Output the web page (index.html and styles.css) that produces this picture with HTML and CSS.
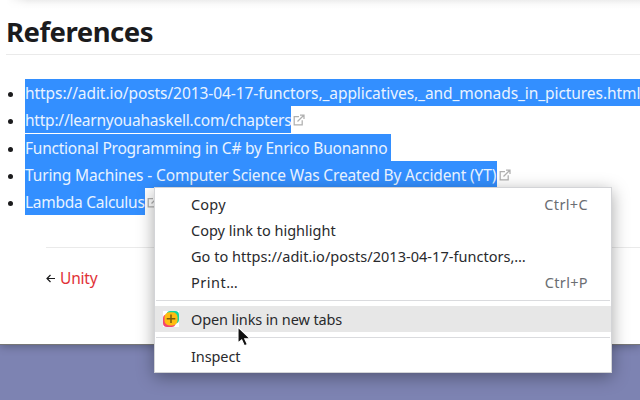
FILE: index.html
```html
<!DOCTYPE html>
<html lang="en">
<head>
<meta charset="utf-8">
<title>References</title>
<link rel="stylesheet" href="styles.css">
</head>
<body>
<svg class="defs" width="0" height="0"><defs>
<symbol id="external" viewBox="0 0 12 12"><path d="M6 2.6H1.2v8.2h8V6.2M4.5 7.5l5.8-5.8M7 1h4v4" fill="none" stroke="currentColor" stroke-width="1.25"/></symbol>
</defs></svg>
<main class="page">
  <div class="block-shadow"></div>
  <h1 class="title"><span>References</span></h1>
  <ul class="links">
    <li><a class="l1">https://adit.io/posts/2013-04-17-functors,_applicatives,_and_monads_in_pictures.html</a></li>
    <li><a class="l2">http://learnyouahaskell.com/chapters</a><svg class="ext"><use href="#external"/></svg></li>
    <li class="spaced"><a class="l3">Functional Programming in C# by Enrico Buonanno</a></li>
    <li><a class="l4">Turing Machines - Computer Science Was Created By Accident (YT)</a><svg class="ext"><use href="#external"/></svg></li>
    <li><a class="l5">Lambda Calculus</a><svg class="ext"><use href="#external"/></svg></li>
  </ul>
  <nav class="pager"><svg class="arrow" viewBox="0 0 9 9"><path d="M9 4.5H1M4.5 1L1 4.5 4.5 8" fill="none" stroke="currentColor" stroke-width="1.2"/></svg><a>Unity</a></nav>
</main>
<div class="menu">
  <div class="item"><span class="m1">Copy</span><kbd>Ctrl+C</kbd></div>
  <div class="item"><span class="m2">Copy link to highlight</span></div>
  <div class="item"><span class="m3">Go to https://adit.io/posts/2013-04-17-functors,…</span></div>
  <div class="item"><span class="m4">Print…</span><kbd>Ctrl+P</kbd></div>
  <hr>
  <div class="item active"><svg class="plus" viewBox="0 0 16 16"><path fill="#fff" d="M0 0h16v16H0z"/><rect x="3.5" width="12.5" height="12.5" rx="4" fill="#12d6a0"/><rect y="3.5" width="12.5" height="12.5" rx="4" fill="#f3456f"/><rect x="1.5" y="1.2" width="13" height="13.3" rx="5" fill="#ffbd10"/><path d="M8 3.5v8.5M3.7 7.7h8.6" stroke="#795b0c" stroke-width="1.5"/></svg><span class="m5">Open links in new tabs</span></div>
  <hr>
  <div class="item"><span class="m6">Inspect</span></div>
</div>
<svg class="cursor" viewBox="0 0 14 22"><path d="M1 1v16l3.7-3.2 2.7 6 3-1.3-2.7-5.8H13z" fill="#111" stroke="#fff" stroke-width="1.1"/></svg>
</body>
</html>
```
FILE: styles.css
```css
* { box-sizing: border-box; }
body { margin: 0; width: 640px; height: 400px; overflow: hidden; background: #7d83b2; font: 15.5px/27px "Noto Sans", sans-serif; color: #1b1b1d; }
.defs { position: absolute; }
.page { height: 345px; background: #fff; border-bottom: 1px solid #777; box-shadow: 0 1px 9px rgba(0,0,0,.3); overflow: hidden; }
.block-shadow { height: 10px; margin-left: 6px; background: linear-gradient(#ededed, #fafafa 45%, #fff 90%); -webkit-mask-image: linear-gradient(90deg, transparent, #000 22px); mask-image: linear-gradient(90deg, transparent, #000 22px); }
.title { margin: 0 0 0 6px; height: 45px; border-bottom: 1px solid #eaeaea; font-size: 27.5px; letter-spacing: -.5px; line-height: 44px; font-weight: 700; white-space: nowrap; }
.links { list-style: none; margin: 24px 0 0; padding: 0 0 0 25px; }
.links li { display: flex; align-items: center; height: 27px; white-space: nowrap; position: relative; }
.links li::before { content: ""; position: absolute; left: -17px; top: 13px; width: 5px; height: 5px; border-radius: 50%; background: #1b1b1d; }
.links .spaced { margin-top: 1px; }
.links a { flex: none; height: 27px; line-height: 29px; background: #338fff; color: #e9f3ff; }
.links .l1 { letter-spacing: -.07px; }
.links .l2 { letter-spacing: -.22px; width: 266px; }
.links .l3 { letter-spacing: -.23px; width: 366px; }
.links .l4 { letter-spacing: -.14px; width: 472px; }
.links .l5 { letter-spacing: -.27px; width: 120px; }
.ext { width: 12px; height: 12px; margin: 1px 0 0 1.5px; color: #b0b0b0; flex: none; }
.pager { display: flex; align-items: center; gap: 5px; margin: 32px 0 0 46px; padding-top: 17px; border-top: 1px solid #eaeaea; }
.pager a { color: #e13238; letter-spacing: -.2px; }
.arrow { width: 9px; height: 9px; }
.menu { position: absolute; left: 154px; top: 187px; width: 458px; height: 186px; padding: 3px 0; border: 1px solid #d3d4d7; background: #fff; box-shadow: 0 4px 16px rgba(0,0,0,.35); font-size: 14.5px; line-height: 26px; color: #292a2d; }
.item { display: flex; height: 26px; padding: 0 23px 0 36px; white-space: nowrap; position: relative; }
.item kbd { margin-left: auto; font: inherit; letter-spacing: .35px; color: #6b6e73; }
.m1 { letter-spacing: .2px; }
.m3 { letter-spacing: .03px; }
.m4 { letter-spacing: .5px; }
.m5 { letter-spacing: -.12px; }
.m6 { letter-spacing: -.1px; }
.active { background: #e7e7e7; }
.plus { position: absolute; left: 8px; top: 5px; width: 16px; height: 16px; }
hr { height: 1px; border: 0; margin: 5px 1px; background: #dadbde; }
.cursor { position: absolute; left: 237px; top: 326px; width: 14px; height: 22px; }
```
